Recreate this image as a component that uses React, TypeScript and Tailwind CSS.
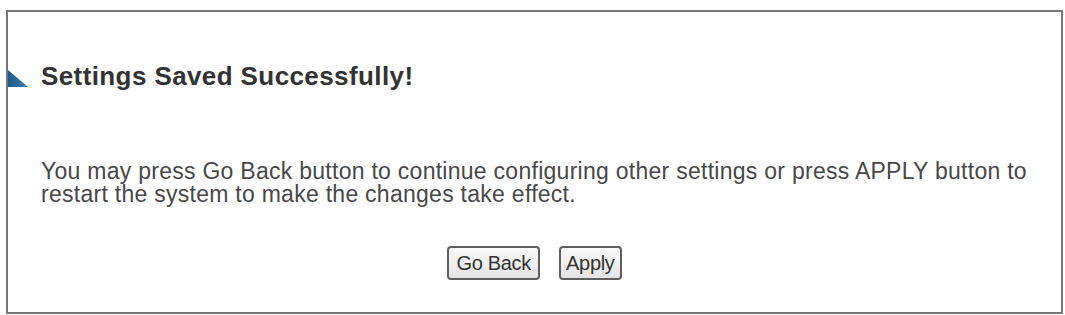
import React from "react";

export default function App() {
  return (
    <div className="w-[1065px] h-[315px] bg-white pl-[6px] pt-[10px] overflow-hidden" style={{ fontFamily: '"Liberation Sans", Arial, sans-serif' }}>
      <div className="w-[1057px] h-[304px] border-2 border-[#777777] bg-white">
        <div className="flex items-start mt-[49px]">
          <svg width="20" height="17" viewBox="0 0 20 17" className="mt-[9px] shrink-0">
            <defs>
              <linearGradient id="tg" x1="0" y1="0" x2="1" y2="0">
                <stop offset="0" stopColor="#1d5a8a" />
                <stop offset="1" stopColor="#3d80b3" />
              </linearGradient>
            </defs>
            <polygon points="0,0 0,17 20,17" fill="url(#tg)" />
          </svg>
          <h1 className="ml-[13px] text-[26px] leading-[30px] font-bold text-[#333333] tracking-[0.4px]">
            Settings Saved Successfully!
          </h1>
        </div>
        <p className="mt-[69px] pl-[33px] pr-[20px] text-[23px] leading-[23px] text-[#484848] tracking-[0.27px]">
          You may press Go Back button to continue configuring other settings or press APPLY button to restart the system to make the changes take effect.
        </p>
        <div className="flex justify-center gap-[19px] mt-[40px]">
          <button className="h-[34px] px-[7px] border-2 border-[#5f5f5f] rounded-[4px] bg-gradient-to-b from-[#fafafa] to-[#e4e4e4] text-[20px] leading-[28px] text-[#333333] tracking-[-0.3px]">
            Go Back
          </button>
          <button className="h-[34px] px-[5px] border-2 border-[#5f5f5f] rounded-[4px] bg-gradient-to-b from-[#fafafa] to-[#e4e4e4] text-[20px] leading-[28px] text-[#333333] tracking-[-0.3px]">
            Apply
          </button>
        </div>
      </div>
    </div>
  );
}
